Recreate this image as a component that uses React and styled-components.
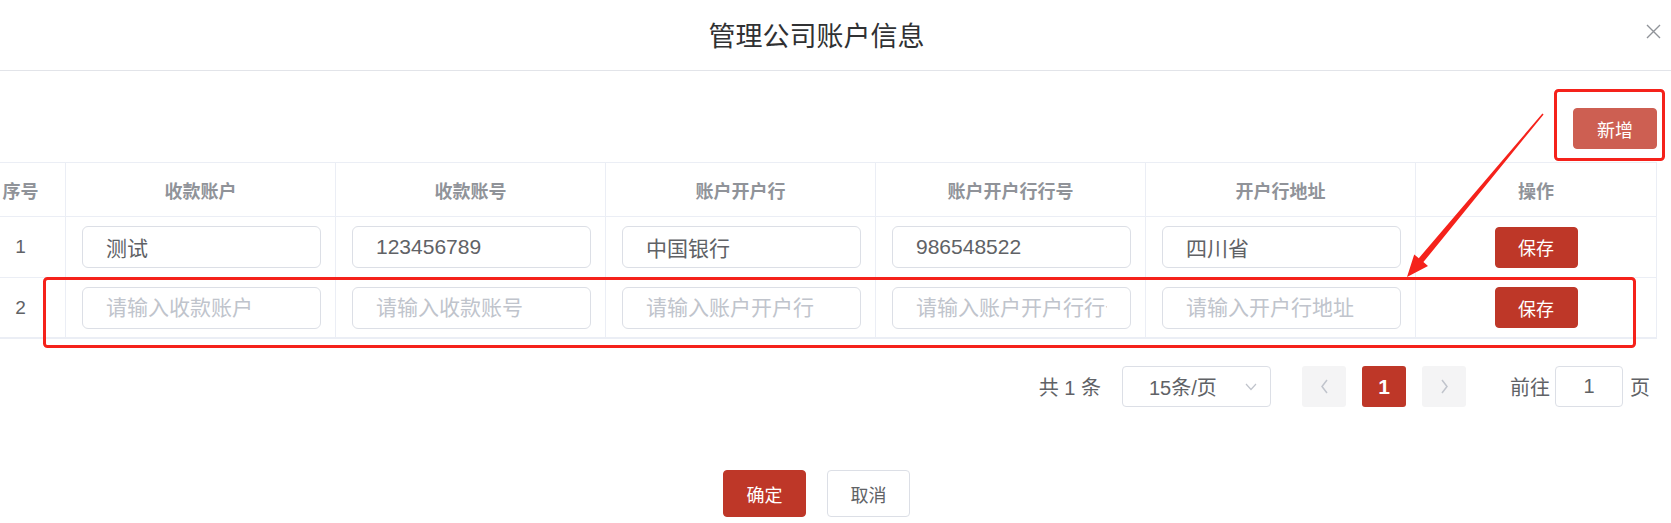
import React from "react";
import styled, { createGlobalStyle } from "styled-components";

const GlobalStyle = createGlobalStyle`
  html, body {
    margin: 0;
    padding: 0;
    background: #fff;
    overflow: hidden;
  }
  * {
    box-sizing: border-box;
  }
  body {
    font-family: "Liberation Sans", "Noto Sans CJK SC", sans-serif;
  }
`;

const Page = styled.div`
  position: relative;
  width: 1671px;
  height: 523px;
  overflow: hidden;
  background: #fff;
`;

const Dialog = styled.div`
  position: relative;
  width: 1721px;
  margin-left: -44px;
`;

const Header = styled.div`
  height: 71px;
  padding-top: 24px;
  border-bottom: 1px solid #e2e4e9;
  text-align: center;
`;

const Title = styled.span`
  font-size: 27px;
  line-height: 27px;
  color: #303133;
`;

const CloseButton = styled.button`
  position: absolute;
  top: 24px;
  right: 16px;
  width: 15px;
  height: 15px;
  padding: 0;
  border: none;
  background: none;
  display: flex;
`;

const Body = styled.div`
  padding: 0 20px;
`;

const Toolbar = styled.div`
  display: flex;
  justify-content: flex-end;
  padding-top: 37px;
  margin-bottom: 13px;
`;

const Button = styled.button`
  height: ${(p) => p.$h || 41}px;
  width: ${(p) => p.$w || 83}px;
  padding: 0;
  border-radius: 4px;
  font-family: inherit;
  font-size: 18px;
  border: 1px solid ${(p) => (p.$variant === "plain" ? "#dcdfe6" : p.$variant === "light" ? "#cd5f52" : "#be3728")};
  background: ${(p) => (p.$variant === "plain" ? "#fff" : p.$variant === "light" ? "#cd5f52" : "#be3728")};
  color: ${(p) => (p.$variant === "plain" ? "#606266" : "#fff")};
`;

const Table = styled.div`
  display: grid;
  grid-template-columns: 90px repeat(5, 270px) 241px;
  border-top: 1px solid #ebeef5;
  border-bottom: 1px solid #ebeef5;
`;

const HeadCell = styled.div`
  height: 54px;
  display: flex;
  align-items: center;
  justify-content: center;
  border-right: 1px solid #ebeef5;
  border-bottom: 1px solid #ebeef5;
  font-size: 18px;
  font-weight: bold;
  color: #909399;
`;

const Cell = styled.div`
  height: ${(p) => p.$h}px;
  display: flex;
  align-items: center;
  justify-content: ${(p) => (p.$center ? "center" : "flex-start")};
  padding: ${(p) => (p.$center ? "0" : "0 15px 0 16px")};
  border-right: 1px solid #ebeef5;
  border-bottom: 1px solid #ebeef5;
  font-size: 19px;
  color: #606266;
`;

const TextInput = styled.input`
  width: 239px;
  height: 42px;
  padding: 0 23px;
  border: 1px solid #dcdfe6;
  border-radius: 6px;
  font-family: inherit;
  font-size: 21px;
  color: #606266;
  outline: none;
  &::placeholder {
    color: #c0c4cc;
  }
`;

const Pager = styled.div`
  display: flex;
  align-items: center;
  justify-content: flex-end;
  height: 41px;
  margin-top: 27px;
  padding-right: 7px;
  font-size: 20px;
  color: #606266;
`;

const Total = styled.span`
  margin-right: 21px;
`;

const SizeSelect = styled.div`
  width: 149px;
  height: 41px;
  margin-right: 31px;
  padding: 0 13px 0 26px;
  display: flex;
  align-items: center;
  justify-content: space-between;
  border: 1px solid #dcdfe6;
  border-radius: 4px;
`;

const PageBtn = styled.div`
  width: 44px;
  height: 41px;
  margin-right: ${(p) => p.$mr || 0}px;
  display: flex;
  align-items: center;
  justify-content: center;
  border-radius: 3px;
  background: ${(p) => (p.$active ? "#be3728" : "#f4f4f5")};
  color: #fff;
  font-size: 21px;
  font-weight: bold;
`;

const Jumper = styled.div`
  display: flex;
  align-items: center;
  margin-left: 44px;
`;

const JumpInput = styled.input`
  width: 68px;
  height: 41px;
  margin: 0 7px 0 5px;
  border: 1px solid #dcdfe6;
  border-radius: 4px;
  text-align: center;
  font-family: inherit;
  font-size: 20px;
  color: #606266;
  outline: none;
`;

const Footer = styled.div`
  display: flex;
  justify-content: center;
  gap: 21px;
  margin-top: 63px;
`;

const Overlay = styled.svg`
  position: absolute;
  left: 0;
  top: 0;
  pointer-events: none;
`;

const columns = ["序号", "收款账户", "收款账号", "账户开户行", "账户开户行行号", "开户行地址", "操作"];

const rows = [
  { h: 61, values: ["测试", "123456789", "中国银行", "986548522", "四川省"] },
  { h: 60, values: ["", "", "", "", ""] },
];

const placeholders = ["请输入收款账户", "请输入收款账号", "请输入账户开户行", "请输入账户开户行行号", "请输入开户行地址"];

const Chevron = ({ dir }) => (
  <svg width="9" height="15" viewBox="0 0 9 15">
    <polyline
      points={dir === "left" ? "7,1 2,7.5 7,14" : "2,1 7,7.5 2,14"}
      fill="none"
      stroke="#c0c4cc"
      strokeWidth="1.5"
    />
  </svg>
);

export default function App() {
  return (
    <Page>
      <GlobalStyle />
      <Dialog>
        <Header>
          <Title>管理公司账户信息</Title>
        </Header>
        <CloseButton aria-label="close">
          <svg width="15" height="15" viewBox="0 0 15 15">
            <path d="M1 1 L14 14 M14 1 L1 14" stroke="#909399" strokeWidth="1.4" />
          </svg>
        </CloseButton>
        <Body>
          <Toolbar>
            <Button $variant="light" $w={84}>新增</Button>
          </Toolbar>
          <Table>
            {columns.map((c) => (
              <HeadCell key={c}>{c}</HeadCell>
            ))}
            {rows.map((r, i) => (
              <React.Fragment key={i}>
                <Cell $h={r.h} $center>{i + 1}</Cell>
                {r.values.map((v, j) => (
                  <Cell $h={r.h} key={j}>
                    <TextInput defaultValue={v} placeholder={placeholders[j]} />
                  </Cell>
                ))}
                <Cell $h={r.h} $center>
                  <Button>保存</Button>
                </Cell>
              </React.Fragment>
            ))}
          </Table>
          <Pager>
            <Total>共 1 条</Total>
            <SizeSelect>
              <span>15条/页</span>
              <svg width="12" height="8" viewBox="0 0 12 8">
                <polyline points="1,1 6,6.5 11,1" fill="none" stroke="#c0c4cc" strokeWidth="1.2" />
              </svg>
            </SizeSelect>
            <PageBtn $mr={16}>
              <Chevron dir="left" />
            </PageBtn>
            <PageBtn $active $mr={16}>1</PageBtn>
            <PageBtn>
              <Chevron dir="right" />
            </PageBtn>
            <Jumper>
              前往
              <JumpInput defaultValue="1" />
              页
            </Jumper>
          </Pager>
        </Body>
        <Footer>
          <Button $h={47}>确定</Button>
          <Button $h={47} $variant="plain">取消</Button>
        </Footer>
      </Dialog>
      <Overlay width="1671" height="523" viewBox="0 0 1671 523">
        <rect x="1555.5" y="90.5" width="108" height="69" rx="3" fill="none" stroke="#f5221b" strokeWidth="3" />
        <rect x="44.5" y="278.5" width="1590" height="68" rx="3" fill="none" stroke="#f5221b" strokeWidth="3" />
        <polygon
          points="1543.6,114.5 1423.4,262.1 1428,266 1407,277 1414.2,254.4 1418.8,258.2 1542.4,113.5"
          fill="#f5221b"
        />
      </Overlay>
    </Page>
  );
}
